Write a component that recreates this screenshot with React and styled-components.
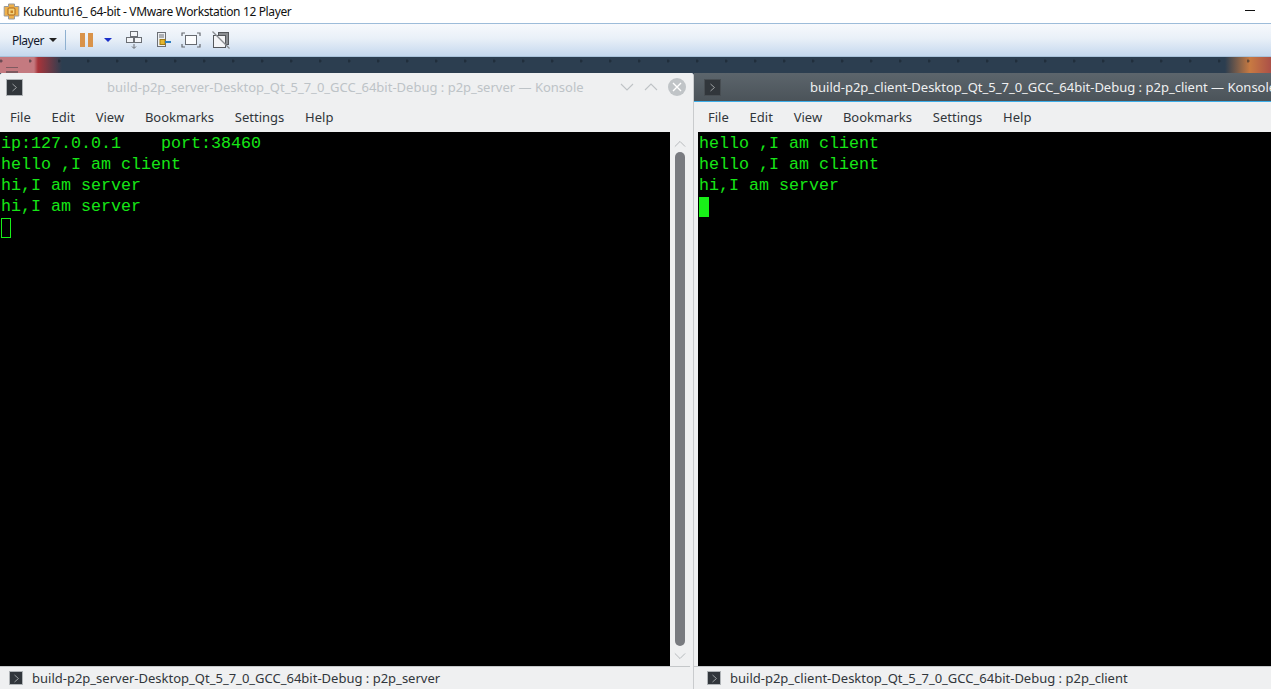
import styled, { createGlobalStyle } from "styled-components";

const Global = createGlobalStyle`
  html, body { margin: 0; padding: 0; background: #fff; overflow: hidden; }
  #root { width: 1271px; height: 689px; }
`;

const Page = styled.div`
  width: 1271px;
  height: 689px;
  display: flex;
  flex-direction: column;
  overflow: hidden;
  font-family: "Noto Sans", sans-serif;
`;

const VmTitleBar = styled.div`
  height: 23px;
  flex: none;
  background: #fff;
  display: flex;
  align-items: center;
  padding: 0 16px 0 3px;
  font-size: 12px;
  color: #111;
`;

const VmTitle = styled.span`
  margin-left: 3px;
  flex: 1;
  letter-spacing: -0.36px;
`;

const Minimize = styled.div`
  width: 10px;
  height: 1px;
  background: #111;
  margin-bottom: 3px;
`;

const VmToolbar = styled.div`
  height: 34px;
  flex: none;
  box-sizing: border-box;
  border-top: 1px solid #9dbcd9;
  border-bottom: 1px solid #a9c2da;
  background: linear-gradient(#f7f9fc, #e9f0f8 45%, #c5d8ee);
  display: flex;
  align-items: center;
  padding-left: 12px;
`;

const PlayerLabel = styled.span`
  font-size: 12px;
  color: #10162a;
  letter-spacing: -0.5px;
`;

const Caret = styled.span`
  width: 0;
  height: 0;
  margin-left: ${(p) => p.$gap}px;
  border-left: 4px solid transparent;
  border-right: 4px solid transparent;
  border-top: 4px solid ${(p) => p.$color};
`;

const ToolSep = styled.div`
  width: 1px;
  height: 20px;
  background: #8eb0d0;
  margin: 0 14px 0 8px;
`;

const PauseBar = styled.div`
  width: 5px;
  height: 14px;
  background: #d9934a;
  margin-right: ${(p) => p.$gap}px;
`;

const ToolIcon = styled.svg`
  display: block;
  margin-left: ${(p) => p.$gap}px;
  flex: none;
`;

const DesktopStrip = styled.div`
  height: 16px;
  flex: none;
  background:
    radial-gradient(circle at 1px 4px, rgba(20, 30, 40, 0.5) 1px, transparent 2px) 0 0 / 29px 16px,
    linear-gradient(90deg, #c47a80 0, #c47a80 34px, #a8343a 38px, #2c3e50 62px, #2c3e50 1225px, #c87a42 1250px, #ab5048 1271px);
  padding: 10px 0 0 6px;
  box-sizing: border-box;
`;

const Hamburger = styled.div`
  width: 12px;
  height: 3px;
  border-top: 1px solid #7f5a60;
  border-bottom: 2px solid #7f5a60;
`;

const Windows = styled.div`
  flex: 1;
  min-height: 0;
  display: flex;
  background: #2c3e50;
`;

const Window = styled.section`
  height: 100%;
  flex: none;
  box-sizing: border-box;
  width: ${(p) => p.$width}px;
  display: flex;
  flex-direction: column;
  background: #eff0f1;
  border-right: ${(p) => (p.$active ? "none" : "1px solid #c9cbcd")};
  border-radius: ${(p) => (p.$active ? "0" : "3px 3px 0 0")};
  overflow: hidden;
`;

const WinTitle = styled.header`
  height: 28px;
  flex: none;
  display: flex;
  align-items: center;
  padding-left: ${(p) => p.$left}px;
  background: ${(p) => (p.$active ? "linear-gradient(#5c656c, #4b5359)" : "#eff0f1")};
  border-bottom: 1px solid ${(p) => (p.$active ? "#3daee9" : "#eff0f1")};
  color: ${(p) => (p.$active ? "#eff0f1" : "#bdc3c7")};
  font-size: 13px;
`;

const TitleText = styled.span`
  margin-left: ${(p) => p.$left}px;
  white-space: nowrap;
`;

const PromptIcon = styled.div`
  width: ${(p) => p.$size}px;
  height: ${(p) => p.$size}px;
  flex: none;
  background: #31363b;
  border: 1px solid ${(p) => (p.$active ? "#474d52" : "#b0b4b7")};
  box-sizing: border-box;
  display: flex;
  align-items: center;
  justify-content: center;
`;

const WinButtons = styled.div`
  margin-left: auto;
  display: flex;
  align-items: center;
  gap: 10px;
  padding-right: 7px;
`;

const CloseButton = styled.div`
  width: 18px;
  height: 18px;
  border-radius: 50%;
  background: #c0c4c7;
  display: flex;
  align-items: center;
  justify-content: center;
`;

const MenuBar = styled.nav`
  height: 30px;
  flex: none;
  display: flex;
  align-items: center;
  gap: 20.8px;
  padding-left: ${(p) => p.$left}px;
  font-size: 13px;
  color: #31363b;
`;

const Body = styled.div`
  flex: 1;
  min-height: 0;
  display: flex;
  padding-left: ${(p) => p.$left}px;
`;

const Terminal = styled.pre`
  margin: 0;
  width: ${(p) => (p.$width ? `${p.$width}px` : "auto")};
  flex: ${(p) => (p.$width ? "none" : "1")};
  background: #000;
  color: #16e616;
  font-family: "Liberation Mono", monospace;
  font-size: 16.67px;
  line-height: 21px;
  padding: 1px 0 0 1px;
  box-sizing: border-box;
`;

const Cursor = styled.span`
  display: block;
  width: 10px;
  height: 20px;
  margin-top: 1px;
  box-sizing: border-box;
  border: 1px solid #18f018;
  background: ${(p) => (p.$filled ? "#18f018" : "transparent")};
`;

const Scrollbar = styled.div`
  width: 20px;
  flex: none;
  display: flex;
  flex-direction: column;
  align-items: center;
  padding: 8px 0 6px;
  box-sizing: border-box;
`;

const ScrollThumb = styled.div`
  width: 10px;
  flex: 1;
  margin: 4px 0 6px;
  border-radius: 5px;
  background: #797b80;
`;

const TabBar = styled.footer`
  height: 22px;
  flex: none;
  display: flex;
  align-items: center;
  padding-left: ${(p) => p.$left}px;
  gap: 9px;
  font-size: 13px;
  color: #31363b;
  border-top: 1px solid #c4c7c9;
  margin-right: ${(p) => p.$cut}px;
`;

const Prompt = ({ color = "#9a9ea1" }) => (
  <svg width="9" height="9" viewBox="0 0 9 9">
    <path d="M2.5 1 L6.5 4.5 L2.5 8" fill="none" stroke={color} strokeWidth="1" />
  </svg>
);

const Chevron = ({ up, color = "#bfc3c6", w = 14 }) => (
  <svg width={w} height="8" viewBox="0 0 14 8" style={{ display: "block", flex: "none" }}>
    <path d={up ? "M1 7 L7 1 L13 7" : "M1 1 L7 7 L13 1"} fill="none" stroke={color} strokeWidth="1.1" />
  </svg>
);

const VmLogo = () => (
  <svg width="17" height="17" viewBox="0 0 17 17" style={{ flex: "none" }}>
    <path d="M5.5 1 H11.5 V3.5 H15.8 V13 H11.5 V16 H5.5 V13 H1.2 V3.5 H5.5 Z" fill="#eeb04a" stroke="#9a9a9a" />
    <rect x="5" y="5" width="7" height="7" rx="1" fill="#f5d27a" stroke="#a8641a" />
    <rect x="7.5" y="7.5" width="2.5" height="2.5" fill="#c9801f" />
  </svg>
);

const SendKeysIcon = () => (
  <ToolIcon $gap={13} width="18" height="20" viewBox="0 0 18 20">
    <g fill="#f3f5f8" stroke="#6b6f75">
      <rect x="5.5" y="1.5" width="7" height="5" />
      <rect x="1.5" y="7.5" width="7" height="5" />
      <rect x="9.5" y="7.5" width="7" height="5" />
    </g>
    <path d="M9 14 V18 M7 16.5 L9 18.5 L11 16.5" fill="none" stroke="#6b6f75" />
  </ToolIcon>
);

const UsbIcon = () => (
  <ToolIcon $gap={13} width="16" height="18" viewBox="0 0 16 18">
    <rect x="1.5" y="1.5" width="8" height="14" fill="#eef0f3" stroke="#6b6f75" />
    <path d="M3 4 H8 M3 6 H8" stroke="#6b6f75" />
    <rect x="4" y="8.5" width="5" height="5" fill="#e4b62e" stroke="#a07c15" />
    <path d="M9 11 H15" stroke="#2f7fc1" strokeWidth="2" />
  </ToolIcon>
);

const FullscreenIcon = () => (
  <ToolIcon $gap={9} width="20" height="16" viewBox="0 0 20 16">
    <rect x="4.5" y="3.5" width="11" height="9" fill="#fbfcfd" stroke="#666a70" />
    <path d="M1 4 V1 H4 M16 1 H19 V4 M19 12 V15 H16 M4 15 H1 V12" fill="none" stroke="#666a70" strokeWidth="1.2" />
  </ToolIcon>
);

const UnityIcon = () => (
  <ToolIcon $gap={11} width="18" height="18" viewBox="0 0 18 18">
    <rect x="6.5" y="1.5" width="10" height="12" fill="#8b8e92" stroke="#55585c" />
    <rect x="1.5" y="4.5" width="12" height="12" fill="#f4f5f7" stroke="#55585c" />
    <path d="M0.5 0.5 L17.5 17.5" stroke="#8a8d91" strokeWidth="1.2" />
  </ToolIcon>
);

const MENU = ["File", "Edit", "View", "Bookmarks", "Settings", "Help"];

const Menu = ({ left }) => (
  <MenuBar $left={left}>
    {MENU.map((m) => (
      <span key={m}>{m}</span>
    ))}
  </MenuBar>
);

const App = () => {
  return (
    <Page>
      <Global />
      <VmTitleBar>
        <VmLogo />
        <VmTitle>Kubuntu16_ 64-bit - VMware Workstation 12 Player</VmTitle>
        <Minimize />
      </VmTitleBar>
      <VmToolbar>
        <PlayerLabel>Player</PlayerLabel>
        <Caret $gap={5} $color="#222" />
        <ToolSep />
        <PauseBar $gap={3} />
        <PauseBar $gap={11} />
        <Caret $gap={0} $color="#1a2fc9" />
        <SendKeysIcon />
        <UsbIcon />
        <FullscreenIcon />
        <UnityIcon />
      </VmToolbar>
      <DesktopStrip>
        <Hamburger />
      </DesktopStrip>
      <Windows>
        <Window $width={694}>
          <WinTitle $left={6}>
            <PromptIcon $size={17}>
              <Prompt />
            </PromptIcon>
            <TitleText $left={84}>build-p2p_server-Desktop_Qt_5_7_0_GCC_64bit-Debug : p2p_server — Konsole</TitleText>
            <WinButtons>
              <Chevron />
              <Chevron up />
              <CloseButton>
                <svg width="10" height="10" viewBox="0 0 10 10">
                  <path d="M1 1 L9 9 M9 1 L1 9" stroke="#fff" strokeWidth="1.4" />
                </svg>
              </CloseButton>
            </WinButtons>
          </WinTitle>
          <Menu left={10} />
          <Body $left={0}>
            <Terminal $width={670}>
              {"ip:127.0.0.1    port:38460\nhello ,I am client\nhi,I am server\nhi,I am server"}
              <Cursor />
            </Terminal>
            <Scrollbar>
              <Chevron up w={12} color="#b4b7ba" />
              <ScrollThumb />
              <Chevron w={12} color="#b4b7ba" />
            </Scrollbar>
          </Body>
          <TabBar $left={9} $cut={3}>
            <PromptIcon $size={14}>
              <Prompt />
            </PromptIcon>
            <span>build-p2p_server-Desktop_Qt_5_7_0_GCC_64bit-Debug : p2p_server</span>
          </TabBar>
        </Window>
        <Window $width={577} $active>
          <WinTitle $active $left={10}>
            <PromptIcon $active $size={17}>
              <Prompt />
            </PromptIcon>
            <TitleText $left={89}>build-p2p_client-Desktop_Qt_5_7_0_GCC_64bit-Debug : p2p_client — Konsole</TitleText>
          </WinTitle>
          <Menu left={14} />
          <Body $left={4}>
            <Terminal>
              {"hello ,I am client\nhello ,I am client\nhi,I am server"}
              <Cursor $filled />
            </Terminal>
          </Body>
          <TabBar $left={13} $cut={0}>
            <PromptIcon $size={14}>
              <Prompt />
            </PromptIcon>
            <span>build-p2p_client-Desktop_Qt_5_7_0_GCC_64bit-Debug : p2p_client</span>
          </TabBar>
        </Window>
      </Windows>
    </Page>
  );
};

export default App;
